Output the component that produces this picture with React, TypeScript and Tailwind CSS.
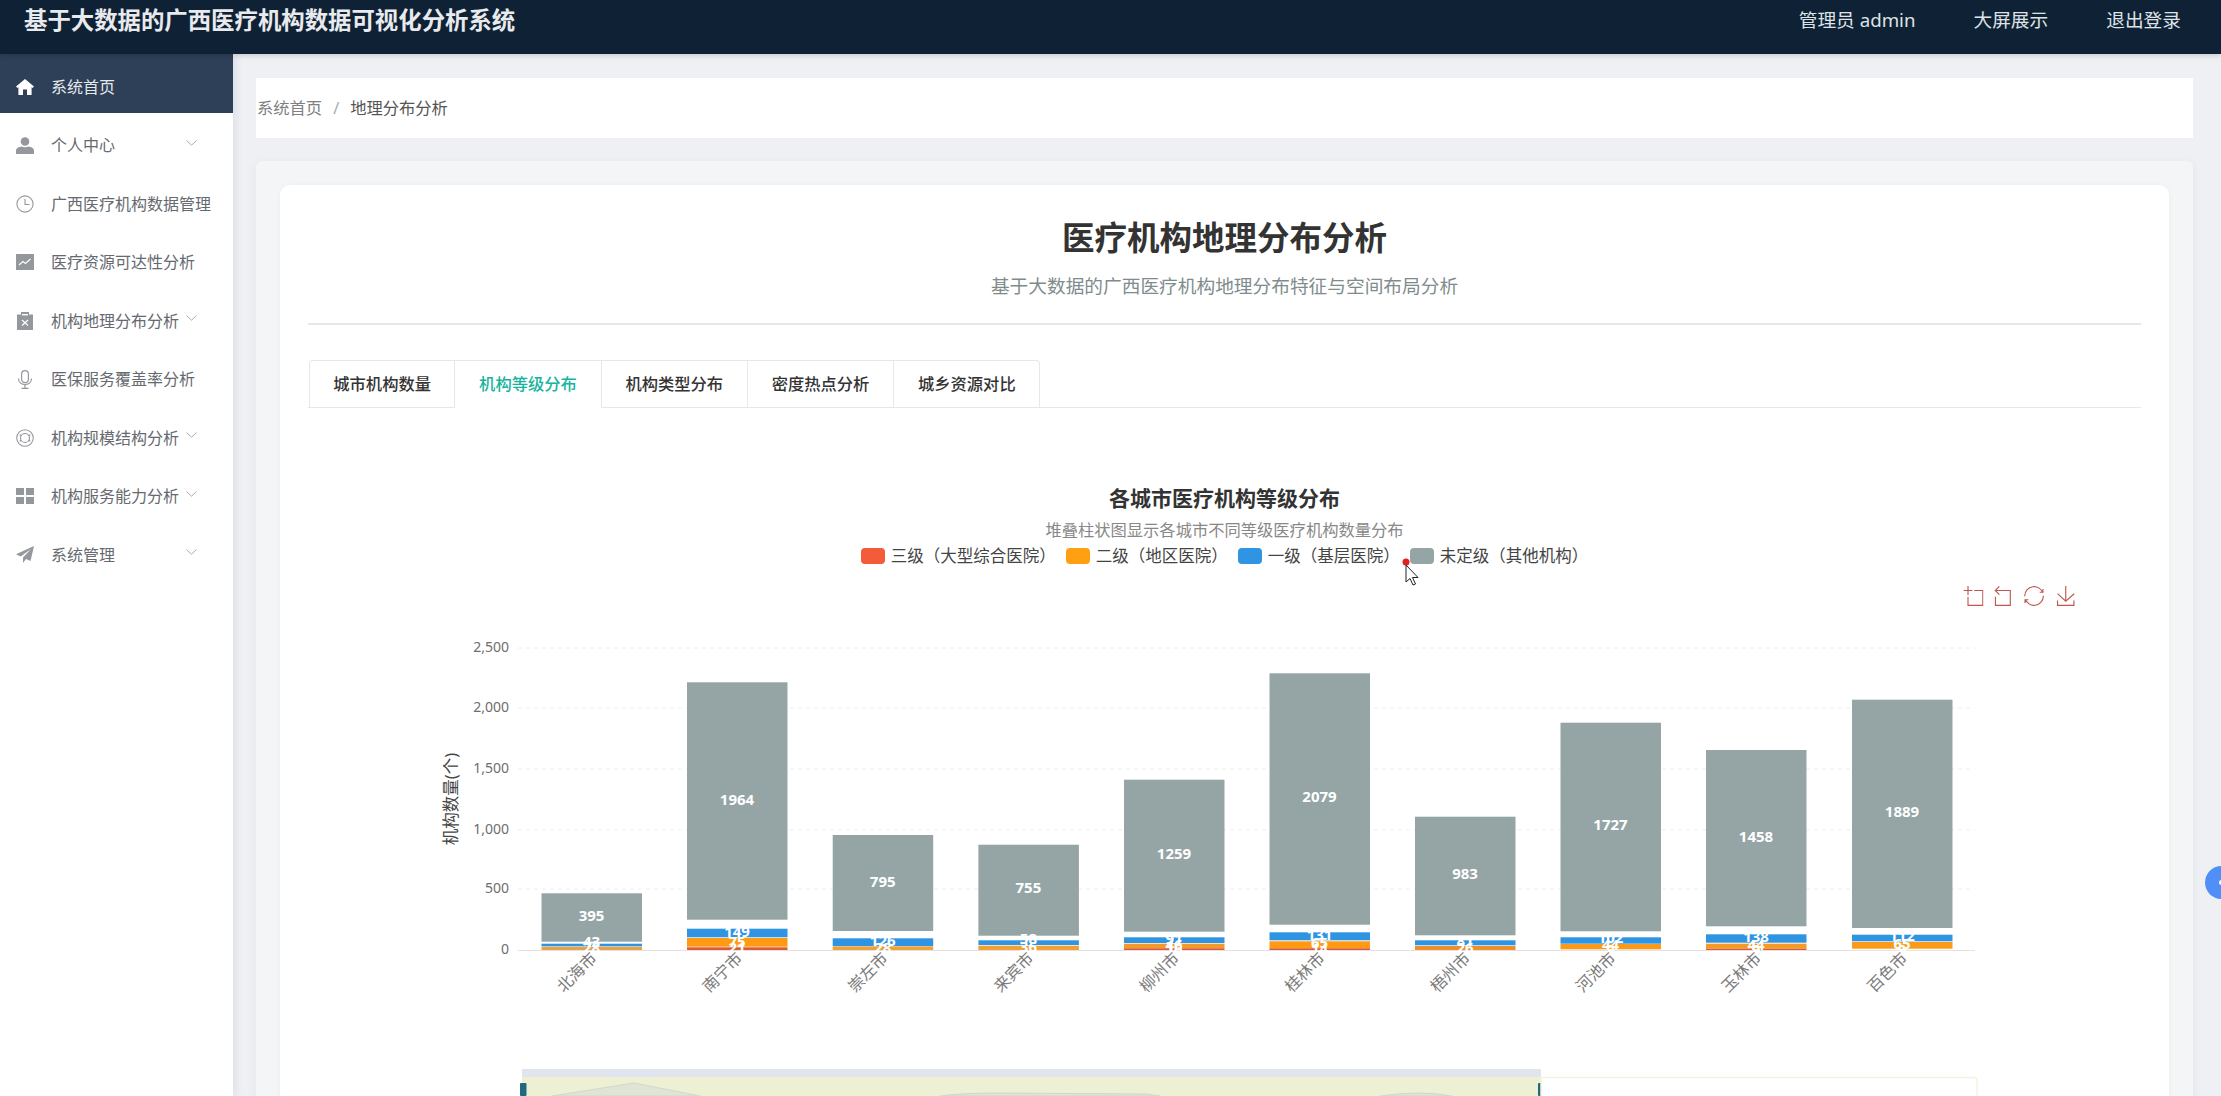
import React from "react";

const Home = () => (
  <svg width="18" height="16" viewBox="0 0 18 16"><path d="M9 0 18 7.6 16.6 9 15.6 8.2V16H11V10.5H7V16H2.4V8.2L1.4 9 0 7.6Z" fill="currentColor" /></svg>
);
const User = () => (
  <svg width="18" height="17" viewBox="0 0 18 17"><circle cx="9" cy="4.5" r="4.3" fill="currentColor" /><path d="M0 17v-3.2C0 11 3 10 5.5 9.6c2 1 5 1 7 0C15 10 18 11 18 13.8V17Z" fill="currentColor" /></svg>
);
const Clock = () => (
  <svg width="20" height="20" viewBox="0 0 20 20" fill="none" stroke="currentColor" strokeWidth="1.2"><circle cx="10" cy="10" r="9" /><path d="M10 4.5V10.5H15" /></svg>
);
const ChartIc = () => (
  <svg width="18" height="16" viewBox="0 0 18 16"><rect width="18" height="16" fill="currentColor" /><path d="M3 11 7 7.5 9.5 9.5 14.5 5" fill="none" stroke="#fff" strokeWidth="1.1" /></svg>
);
const Clip = () => (
  <svg width="16" height="18" viewBox="0 0 16 18"><path d="M0 2.5H4V0H12V2.5H16V18H0Z" fill="currentColor" /><path d="M5 8 11 13.5M11 8 5 13.5" stroke="#fff" strokeWidth="1.2" /><rect x="5" y="2" width="6" height="1.4" fill="#fff" /></svg>
);
const Mic = () => (
  <svg width="16" height="19" viewBox="0 0 16 19" fill="none" stroke="currentColor" strokeWidth="1.2"><rect x="4.6" y=".6" width="6.8" height="12" rx="3.4" /><path d="M1.5 8.5c0 8 13 8 13 0M8 15v3.4M4.5 18.4h7" /></svg>
);
const Buoy = () => (
  <svg width="20" height="20" viewBox="0 0 20 20" fill="none" stroke="currentColor" strokeWidth="1.2"><circle cx="10" cy="10" r="9.2" /><circle cx="10" cy="10" r="5" /><path d="M4 6.5 6 7.5M16 6.5 14 7.5M4 13.5 6 12.5M16 13.5 14 12.5" /></svg>
);
const Grid = () => (
  <svg width="18" height="16" viewBox="0 0 18 16" fill="currentColor"><rect width="8" height="7" /><rect x="10" width="8" height="7" /><rect y="9" width="8" height="7" /><rect x="10" y="9" width="8" height="7" /></svg>
);
const Send = () => (
  <svg width="18" height="17" viewBox="0 0 18 17"><path d="M18 0 0 8.2 4.7 10.6 15 3 7 11.6V17L10 13 14.5 15Z" fill="currentColor" /></svg>
);
const Chevron = () => (
  <svg className="absolute left-[186px] top-[27px]" width="11" height="6" viewBox="0 0 11 6" fill="none" stroke="#a8abb2" strokeWidth="1"><path d="M.5.5 5.5 5.2 10.5.5" /></svg>
);

const menu = [
  { label: "系统首页", icon: <Home />, active: true },
  { label: "个人中心", icon: <User />, chevron: true },
  { label: "广西医疗机构数据管理", icon: <Clock /> },
  { label: "医疗资源可达性分析", icon: <ChartIc /> },
  { label: "机构地理分布分析", icon: <Clip />, chevron: true },
  { label: "医保服务覆盖率分析", icon: <Mic /> },
  { label: "机构规模结构分析", icon: <Buoy />, chevron: true },
  { label: "机构服务能力分析", icon: <Grid />, chevron: true },
  { label: "系统管理", icon: <Send />, chevron: true },
];

const tabs = ["城市机构数量", "机构等级分布", "机构类型分布", "密度热点分析", "城乡资源对比"];

const legend = [
  { c: "bg-[#f45b39]", t: "三级（大型综合医院）" },
  { c: "bg-[#ff9f12]", t: "二级（地区医院）" },
  { c: "bg-[#2f95e3]", t: "一级（基层医院）" },
  { c: "bg-[#95a5a6]", t: "未定级（其他机构）" },
];

type Bar = {
  x: number;
  name: string;
  gray: [number, number];
  grayLabel: [string, number];
  blue: [number, number];
  orange: [number, number];
  orangeColor: string;
  red?: [number, number];
  small: [string, number][];
};

const bars: Bar[] = [
  { x: 541.5, name: "北海市", gray: [893.3, 941.7], grayLabel: ["395", 915], blue: [943.7, 946.3], orange: [946.7, 950], orangeColor: "#e5a24c", small: [["43", 941], ["28", 947]] },
  { x: 687, name: "南宁市", gray: [682.3, 919.7], grayLabel: ["1964", 799], blue: [928.7, 937.3], orange: [938, 946.7], orangeColor: "#ff9a12", red: [947.3, 950], small: [["149", 931], ["75", 941], ["21", 947]] },
  { x: 832.7, name: "崇左市", gray: [835, 931], grayLabel: ["795", 881], blue: [938.3, 946], orange: [946.3, 950], orangeColor: "#eca23e", small: [["126", 940], ["28", 947]] },
  { x: 978.4, name: "来宾市", gray: [844.7, 935.7], grayLabel: ["755", 887], blue: [940.3, 945], orange: [945.7, 950], orangeColor: "#f0a034", small: [["58", 938], ["36", 946]] },
  { x: 1124, name: "柳州市", gray: [779.7, 931.7], grayLabel: ["1259", 853], blue: [937.3, 943], orange: [943.7, 948.3], orangeColor: "#f49a2a", red: [948.3, 950], small: [["91", 938], ["46", 944], ["16", 948]] },
  { x: 1269.5, name: "桂林市", gray: [673.3, 924.7], grayLabel: ["2079", 796], blue: [932.3, 940.3], orange: [941.3, 948.3], orangeColor: "#ff9a12", red: [948.3, 950], small: [["131", 934], ["65", 942], ["14", 948]] },
  { x: 1415, name: "梧州市", gray: [816.7, 935.3], grayLabel: ["983", 873], blue: [940.3, 945.3], orange: [946, 950], orangeColor: "#ee8f2c", small: [["81", 940], ["26", 947]] },
  { x: 1560.5, name: "河池市", gray: [722.7, 931.3], grayLabel: ["1727", 824], blue: [937.3, 943.7], orange: [944, 949.3], orangeColor: "#fb9a18", small: [["102", 937], ["44", 944], ["9", 949]] },
  { x: 1706, name: "玉林市", gray: [750, 926.3], grayLabel: ["1458", 836], blue: [934.3, 942.7], orange: [943.7, 948.7], orangeColor: "#f59a24", red: [948.7, 950], small: [["138", 936], ["44", 944], ["9", 949]] },
  { x: 1852, name: "百色市", gray: [699.7, 928], grayLabel: ["1889", 811], blue: [934.7, 941.3], orange: [942, 948.7], orangeColor: "#fb9a18", small: [["112", 935], ["65", 943], ["9", 949]] },
];

const ticks: [string, number][] = [["2,500", 648], ["2,000", 708], ["1,500", 769], ["1,000", 830], ["500", 889], ["0", 950]];

const tools = [
  { x: 1963.5, d: "M0,13.5h26.9 M13.5,26.9V0 M32.1,13.5H58V58H13.5 V32.1" },
  { x: 1992, d: "M22,1.4L9.9,13.5l12.3,12.3 M10.3,13.5H54.9v44.6 H10.3v-26" },
  { x: 2024, d: "M3.8,33.4 M47,18.9h9.8V8.7 M56.3,20.1 C52.1,9,40.5,0.6,26.8,2.1C12.6,3.7,1.6,16.2,2.1,30.6 M13,41.1H3.1v10.2 M3.7,39.9c4.2,11.1,15.8,19.5,29.5,18 c14.2-1.6,25.2-14.1,24.7-28.5" },
  { x: 2056, d: "M4.7,22.9L29.3,45.5L54.7,23.4M4.6,43.6L4.6,58L53.8,58L53.8,43.6M29.2,45.1L29.2,0" },
];

function Chart() {
  return (
    <svg className="block" width="1834" height="530" viewBox="308 566 1834 530" fontFamily="'Noto Sans','Noto Sans CJK SC',sans-serif">
      {tools.map((t) => (
        <svg key={t.x} x={t.x} y={586} width="20" height="20" viewBox="0 0 60 60" fill="none" stroke="#c0564e" strokeWidth="3.4">
          <path d={t.d} />
        </svg>
      ))}
      {ticks.slice(0, 5).map(([, y]) => (
        <line key={y} x1="518" x2="1975" y1={y} y2={y} stroke="#eeeeee" strokeDasharray="4 4" />
      ))}
      {ticks.map(([t, y]) => (
        <text key={t} x="509" y={y - 2} textAnchor="end" dominantBaseline="central" fontSize="14" fill="#6e6e6e">{t}</text>
      ))}
      <line x1="518" x2="1975" y1="950.5" y2="950.5" stroke="#eadfdf" />
      <text transform="translate(450.5 799) rotate(-90)" textAnchor="middle" dominantBaseline="central" fontSize="16.5" fill="#444">机构数量(个)</text>
      {bars.map((b) => (
        <g key={b.name}>
          <rect x={b.x} y={b.gray[0]} width="100.5" height={b.gray[1] - b.gray[0]} fill="#95a5a6" />
          <rect x={b.x} y={b.blue[0]} width="100.5" height={b.blue[1] - b.blue[0]} fill="#2f95e3" />
          <rect x={b.x} y={b.orange[0]} width="100.5" height={b.orange[1] - b.orange[0]} fill={b.orangeColor} />
          {b.red && <rect x={b.x} y={b.red[0]} width="100.5" height={b.red[1] - b.red[0]} fill="#dc5a36" />}
          <text x={b.x + 50} y={b.grayLabel[1]} textAnchor="middle" dominantBaseline="central" fontSize="15" fontWeight="700" fill="#fff">{b.grayLabel[0]}</text>
          {b.small.map(([t, y]) => (
            <text key={t + y} x={b.x + 50} y={y} textAnchor="middle" dominantBaseline="central" fontSize="15" fontWeight="700" fill="#fff">{t}</text>
          ))}
          <text transform={`translate(${b.x + 52} 955) rotate(-45)`} textAnchor="end" dominantBaseline="central" fontSize="16" fill="#7a7a7a">{b.name}</text>
        </g>
      ))}
      <rect x="522" y="1069" width="1019" height="8" fill="#dfe4ef" />
      <rect x="522" y="1077" width="1019" height="19" fill="#eef0d4" />
      <path d="M552 1096 634 1083 700 1096ZM940 1096Q960 1093 1000 1093L1146 1094 1160 1096ZM1380 1096Q1420 1090 1452 1096Z" fill="#dfe4d4" stroke="#cfd8cc" strokeWidth="1" />
      <rect x="520" y="1083" width="6.5" height="13" rx="1" fill="#1f6a7f" />
      <rect x="1538" y="1083" width="6.5" height="13" rx="1" fill="#1f6a7f" />
      <path d="M1541 1096V1077.5H1974a3 3 0 0 1 3 3V1096" fill="#fff" stroke="#f3f4e2" strokeWidth="1.5" />
    </svg>
  );
}

export default function App() {
  return (
    <div className="relative flex h-screen flex-col overflow-hidden bg-[#eff0f4] font-['Noto_Sans','Noto_Sans_CJK_SC',sans-serif]">
      <header className="relative z-20 flex h-[54px] shrink-0 items-center bg-[#0f2235] pb-[13px] pl-[24px] pr-[40px] shadow-[0_1px_6px_rgba(0,0,0,0.2)]">
        <h1 className="text-[23.4px] font-bold text-[#e8eaed]">基于大数据的广西医疗机构数据可视化分析系统</h1>
        <div className="ml-auto flex items-center gap-[58px] text-[18.7px] text-[#dfe2e6]">
          <span>管理员 admin</span>
          <span>大屏展示</span>
          <span>退出登录</span>
        </div>
      </header>
      <div className="flex min-h-0 flex-1">
        <aside className="relative z-10 w-[233px] shrink-0 bg-white shadow-[2px_0_8px_rgba(60,70,110,0.1)]">
          {menu.map((m) => (
            <div
              key={m.label}
              className={
                m.active
                  ? "relative flex h-[58.5px] items-center bg-[#2d4058] pl-[16px] pt-[7px] text-[#e6e9ec]"
                  : "relative flex h-[58.5px] items-center pl-[16px] pt-[7px] text-[#666a70]"
              }
            >
              <span className={m.active ? "mr-[17px] flex w-[18px] shrink-0 justify-center text-white" : "mr-[17px] flex w-[18px] shrink-0 justify-center text-[#94979c]"}>{m.icon}</span>
              <span className="whitespace-nowrap text-[16px]">{m.label}</span>
              {m.chevron && <Chevron />}
            </div>
          ))}
        </aside>
        <main className="min-w-0 flex-1 overflow-hidden pl-[23px] pr-[28px] pt-[24px]">
          <div className="flex h-[60px] items-center gap-[11px] bg-white pl-[1px] text-[16.3px]">
            <span className="text-[#7d7f83]">系统首页</span>
            <span className="text-[#a8abb2]">/</span>
            <span className="text-[#555]">地理分布分析</span>
          </div>
          <div className="mt-[23px] rounded-[6px] bg-[#f4f5f6] px-[24px] pt-[24px] shadow-[0_2px_10px_rgba(60,70,110,0.06)]">
            <div className="rounded-[10px] bg-white px-[28px] pb-[40px] pt-[33px] shadow-[0_1px_6px_rgba(0,0,0,0.04)]">
              <h2 className="h-[40px] text-center text-[32.5px] font-bold leading-[40px] text-[#333]">医疗机构地理分布分析</h2>
              <p className="mt-[14px] h-[28px] text-center text-[18.7px] leading-[28px] text-[#7f8c8d]">基于大数据的广西医疗机构地理分布特征与空间布局分析</p>
              <div className="mt-[23px] h-[2px] bg-[#e6e8e8]" />
              <div className="mt-[35px] flex h-[48px] border-b border-[#e4e7ed] pl-px">
                {tabs.map((t, i) => (
                  <div
                    key={t}
                    className={
                      (i === 0 ? "rounded-tl-[4px] border-l " : "") +
                      (i === 4 ? "rounded-tr-[4px] " : "") +
                      (i === 1
                        ? "z-10 -mb-px h-[48px] border-b border-b-white text-[#17b3a0] "
                        : "text-[#333] ") +
                      "flex w-[146.3px] items-center justify-center border-r border-t border-[#e4e7ed] text-[16.3px] font-medium"
                    }
                  >
                    {t}
                  </div>
                ))}
              </div>
              <div className="relative">
                <h3 className="mt-[75px] h-[30px] text-center text-[21px] font-bold leading-[30px] text-[#333]">各城市医疗机构等级分布</h3>
                <p className="mt-[5px] h-[24px] text-center text-[16.3px] leading-[24px] text-[#888]">堆叠柱状图显示各城市不同等级医疗机构数量分布</p>
                <div className="mt-[4px] flex h-[20px] items-center justify-center gap-[10px] text-[16.5px] text-[#444]">
                  {legend.map((l) => (
                    <div key={l.t} className="flex items-center gap-[6px]">
                      <span className={l.c + " h-[16px] w-[24px] rounded-[4px]"} />
                      <span>{l.t}</span>
                    </div>
                  ))}
                </div>
                <Chart />
                <svg className="absolute left-[1093px] top-[73px]" width="22" height="32" viewBox="0 0 22 32">
                  <circle cx="5" cy="6" r="3.5" fill="#e02020" />
                  <path d="M5 9V26L9 22.5 12 29 14.5 28 11.5 21.5H17Z" fill="#fff" stroke="#222" strokeWidth="1" />
                </svg>
              </div>
            </div>
          </div>
        </main>
      </div>
      <div className="absolute right-[-17px] top-[866px] z-30 flex h-[33px] w-[33px] items-center pl-[14px] rounded-full bg-[#4f8ff7]">
        <span className="h-[5px] w-[5px] rounded-full bg-white" />
      </div>
    </div>
  );
}
